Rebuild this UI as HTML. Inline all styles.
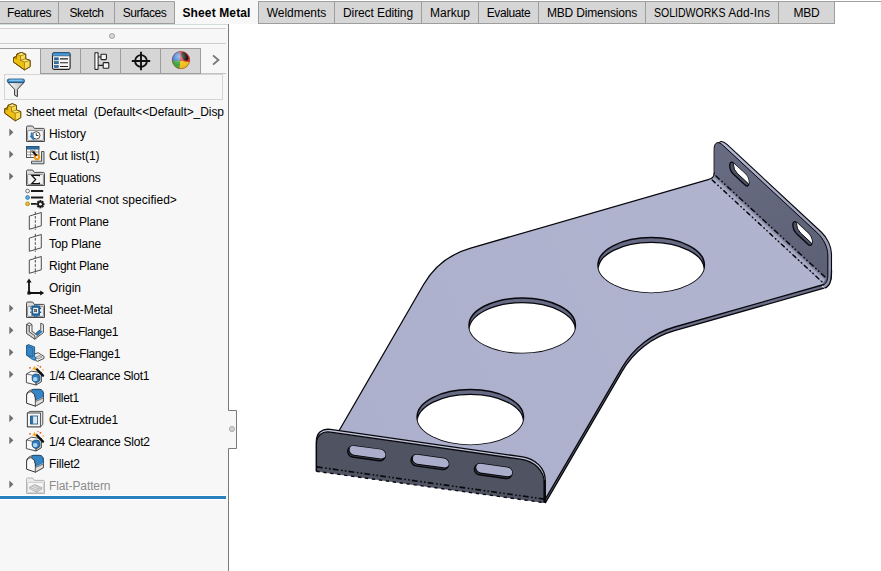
<!DOCTYPE html><html><head><meta charset="utf-8"><title>sheet metal</title><style>
*{box-sizing:border-box;margin:0;padding:0}
html,body{width:881px;height:571px;overflow:hidden;background:#fff}
body{font-family:"Liberation Sans",sans-serif;font-size:12px;color:#000;position:relative}
.abs{position:absolute}
#tabbar{position:absolute;left:0;top:0;width:881px;height:24px}
#tabbar .line{position:absolute;left:0;top:1px;width:881px;height:1px;background:#a0a0a0}
.tab{position:absolute;top:2px;height:22px;background:#d6d6d6;border-right:1px solid #9d9d9d;border-bottom:1px solid #9d9d9d;text-align:center;line-height:23px;white-space:pre}
.tab.act{background:#f7f7f7;border:none;font-weight:bold;top:0;height:24px;line-height:27px}
#panel{position:absolute;left:0;top:24px;width:228px;height:547px;background:#f7f7f7}
.row{position:absolute;left:0;height:22px;width:226px;white-space:pre;overflow:hidden}
.row .t{position:absolute;left:49px;top:1px;line-height:22px}
.row svg{position:absolute}
</style></head><body>
<div id="tabbar"><div class="line"></div>
<div class="tab" style="left:0px;width:59px;letter-spacing:-0.42px">Features</div>
<div class="tab" style="left:59px;width:56px;letter-spacing:-0.45px">Sketch</div>
<div class="tab" style="left:115px;width:60px;letter-spacing:-0.48px">Surfaces</div>
<div class="tab act" style="left:175px;width:83px;letter-spacing:0.12px">Sheet Metal</div>
<div class="tab" style="left:259px;width:76px;letter-spacing:-0.03px">Weldments</div>
<div class="tab" style="left:335px;width:87px;letter-spacing:-0.1px">Direct Editing</div>
<div class="tab" style="left:422px;width:57px;letter-spacing:0.0px">Markup</div>
<div class="tab" style="left:479px;width:60px;letter-spacing:-0.4px">Evaluate</div>
<div class="tab" style="left:539px;width:107px;letter-spacing:-0.18px">MBD Dimensions</div>
<div class="tab" style="left:646px;width:133px;letter-spacing:0.06px"><span style="display:inline-block;transform:scaleX(0.878);transform-origin:0 50%;margin-right:-9.9px;letter-spacing:0">SOLIDWORKS</span> Add-Ins</div>
<div class="tab" style="left:779px;width:56px;letter-spacing:-0.22px">MBD</div>
<div class="abs" style="left:258px;top:1px;width:1px;height:23px;background:#9d9d9d"></div>
</div>
<div id="panel">
<div class="abs" style="left:0;top:0;width:228px;height:4px;background:#fafafa"></div><div class="abs" style="left:0;top:0;width:228px;height:1px;background:#d3dcdc"></div>
<div class="abs" style="left:0;top:4px;width:226px;height:1px;background:#d2d2d2"></div>
<div class="abs" style="left:0;top:19px;width:226px;height:1px;background:#cccccc"></div>
<div class="abs" style="left:109px;top:9px;width:6px;height:6px;border-radius:50%;background:#dadada;border:1px solid #a2a2a2;box-shadow:0 0 0 1px #fcfcfc"></div>
<div class="abs" style="left:0;top:24px;width:201px;height:26px;background:#d6d6d6;border-top:1px solid #9d9d9d;border-bottom:1px solid #9d9d9d"></div>
<div class="abs" style="left:0;top:25px;width:41px;height:26px;background:#f7f7f7;border-right:1px solid #9d9d9d"></div>
<div class="abs" style="left:80px;top:24px;width:1px;height:26px;background:#9d9d9d"></div>
<div class="abs" style="left:120px;top:24px;width:1px;height:26px;background:#9d9d9d"></div>
<div class="abs" style="left:160px;top:24px;width:1px;height:26px;background:#9d9d9d"></div>
<div class="abs" style="left:200px;top:24px;width:1px;height:26px;background:#9d9d9d"></div>
<svg class="abs" style="left:12.5px;top:27.6px" width="19" height="19" viewBox="0 0 19 19"><g transform="translate(0.2 0.3)"><path d="M0.2 5.3 L3.2 4.2 L3.7 1.7 L8.2 0.1 L12.5 1.9 V6.5 L16.9 8.1 V14.4 L11.2 17.6 L0.2 9.7 Z" fill="#f0c010" stroke="#6e5006" stroke-width="1" stroke-linejoin="round"/><path d="M3.7 1.7 L8.2 0.1 L12.5 1.9 L7.3 3.5 Z" fill="#fae883"/><path d="M7.3 3.5 L12.5 1.9 V6.5 L7.3 8.1 Z" fill="#f7dc55"/><path d="M7.3 8.1 L12.5 6.5 L16.9 8.1 L11.2 9.7 Z" fill="#fae883"/><path d="M11.2 9.7 L16.9 8.1 V14.4 L11.2 17.6 Z" fill="#f7dc55"/><path d="M3.7 1.7 L7.3 3.5 V8.1 L11.2 9.7 V17.6 M7.3 3.5 L12.5 1.9 M7.3 8.1 L12.5 6.5 M11.2 9.7 L16.9 8.1 M3.2 4.2 L3.4 6.6 L0.2 5.3" fill="none" stroke="#8a6a0c" stroke-width="0.7" stroke-linejoin="round"/><path d="M0.2 5.3 L3.2 4.2 L3.7 1.7 L8.2 0.1 L12.5 1.9 V6.5 L16.9 8.1 V14.4 L11.2 17.6 L0.2 9.7 Z" fill="none" stroke="#6e5006" stroke-width="1" stroke-linejoin="round"/></g></svg><svg class="abs" style="left:51px;top:27px" width="21" height="21" viewBox="0 0 21 21"><rect x="1.5" y="1.8" width="17.6" height="16.6" rx="1.6" fill="#f6f6f6" stroke="#222" stroke-width="1.1"/><path d="M1.5 3.4 q0-1.6 1.6-1.6h14.4q1.6 0 1.6 1.6v1.4h-17.6z" fill="#4a9bd6" stroke="#1d4f7c" stroke-width="0.7"/><rect x="3.4" y="6.8" width="4" height="2.2" fill="#2b6ea8" stroke="#16456f" stroke-width="0.5"/><rect x="3.4" y="10.6" width="4" height="2.2" fill="#2b6ea8" stroke="#16456f" stroke-width="0.5"/><rect x="3.4" y="14.4" width="4" height="2.2" fill="#2b6ea8" stroke="#16456f" stroke-width="0.5"/><path d="M9 7.9 H17 M9 11.7 H17 M9 15.5 H17" stroke="#222" stroke-width="1.1"/></svg><svg class="abs" style="left:92px;top:27px" width="20" height="21" viewBox="0 0 20 21"><path d="M3 1.6 V18.6 M6 1.6 V18.6" stroke="#222" stroke-width="1.2" fill="none"/><path d="M6 6 H9 M6 14.4 H12" stroke="#222" stroke-width="1.2"/><path d="M3 1.8 H6 M3 18.4 H6" stroke="#222" stroke-width="1.2"/><rect x="3.6" y="2.4" width="1.8" height="15.4" fill="#fff"/><rect x="9" y="3.2" width="5.4" height="5.4" rx="0.8" fill="#f6f6f6" stroke="#222" stroke-width="1.1"/><rect x="11.2" y="11.6" width="5.6" height="5.6" rx="0.8" fill="#f6f6f6" stroke="#222" stroke-width="1.1"/></svg><svg class="abs" style="left:130px;top:26px" width="22" height="22" viewBox="0 0 22 22"><circle cx="11" cy="11" r="5.9" fill="none" stroke="#111" stroke-width="1.9"/><path d="M11 1.8 V20.2 M1.8 11 H20.2" stroke="#111" stroke-width="1.9"/></svg><svg class="abs" style="left:170px;top:25px" width="22" height="22" viewBox="0 0 22 22"><defs><clipPath id="cw"><circle cx="11" cy="11" r="8.8"/></clipPath><radialGradient id="cwg" cx="0.4" cy="0.3" r="0.8"><stop offset="0" stop-color="#fff" stop-opacity="0.55"/><stop offset="0.6" stop-color="#fff" stop-opacity="0"/><stop offset="1" stop-color="#000" stop-opacity="0.25"/></radialGradient></defs><g clip-path="url(#cw)"><rect x="0" y="0" width="22" height="22" fill="#d8281c"/><path d="M0 0 H9 L10.2 11.8 H0 Z" fill="#2f78d6"/><path d="M0 11.8 L10.4 11.8 L9 22 H0 Z" fill="#3aa63a"/><path d="M10.4 11.8 L22 13.6 V22 H9 Z" fill="#f2c21a"/><ellipse cx="14.6" cy="7.4" rx="2.9" ry="4.8" fill="#141414" transform="rotate(-35 14.6 7.4)"/><circle cx="11" cy="11" r="8.8" fill="url(#cwg)"/></g><circle cx="11" cy="11" r="8.8" fill="none" stroke="#7a1a12" stroke-width="0.5" opacity="0.6"/></svg><svg class="abs" style="left:210px;top:29px" width="12" height="14" viewBox="0 0 12 14"><path d="M3 2.4 L8.4 7 L3 11.6" fill="none" stroke="#767676" stroke-width="1.8"/></svg>
<div class="abs" style="left:201px;top:49px;width:25px;height:1px;background:#c4c4c4"></div>
<div class="abs" style="left:4px;top:50px;width:219px;height:26px;border:1px solid #d4d4d4;background:#f7f7f7"></div>
<svg class="abs" style="left:6px;top:54px" width="20" height="20" viewBox="0 0 20 20"><defs><linearGradient id="fg" x1="0" x2="1"><stop offset="0" stop-color="#fff"/><stop offset="1" stop-color="#b8b8b8"/></linearGradient></defs><path d="M2 4.4 L8.6 11.4 V17.2 L11.4 18.6 V11.4 L18 4.4 Z" fill="url(#fg)" stroke="#333" stroke-width="1" stroke-linejoin="round"/><rect x="1.2" y="1" width="17.4" height="3.6" rx="1.8" fill="#3d8fcc" stroke="#1d4f7c" stroke-width="0.8"/><path d="M3.4 2.2 H16.4" stroke="#a8d8f4" stroke-width="1"/></svg>
</div>
<div class="row" style="top:100px;letter-spacing:-0.07px"><svg style="left:3.5px;top:2.5px" width="22" height="22" viewBox="0 0 22 22"><g transform="translate(0.5 0.6) scale(0.96 0.98)"><path d="M0.2 5.3 L3.2 4.2 L3.7 1.7 L8.2 0.1 L12.5 1.9 V6.5 L16.9 8.1 V14.4 L11.2 17.6 L0.2 9.7 Z" fill="#f0c010" stroke="#6e5006" stroke-width="1" stroke-linejoin="round"/><path d="M3.7 1.7 L8.2 0.1 L12.5 1.9 L7.3 3.5 Z" fill="#fae883"/><path d="M7.3 3.5 L12.5 1.9 V6.5 L7.3 8.1 Z" fill="#f7dc55"/><path d="M7.3 8.1 L12.5 6.5 L16.9 8.1 L11.2 9.7 Z" fill="#fae883"/><path d="M11.2 9.7 L16.9 8.1 V14.4 L11.2 17.6 Z" fill="#f7dc55"/><path d="M3.7 1.7 L7.3 3.5 V8.1 L11.2 9.7 V17.6 M7.3 3.5 L12.5 1.9 M7.3 8.1 L12.5 6.5 M11.2 9.7 L16.9 8.1 M3.2 4.2 L3.4 6.6 L0.2 5.3" fill="none" stroke="#8a6a0c" stroke-width="0.7" stroke-linejoin="round"/><path d="M0.2 5.3 L3.2 4.2 L3.7 1.7 L8.2 0.1 L12.5 1.9 V6.5 L16.9 8.1 V14.4 L11.2 17.6 L0.2 9.7 Z" fill="none" stroke="#6e5006" stroke-width="1" stroke-linejoin="round"/></g></svg><span class="t" style="left:26px">sheet metal  (Default&lt;&lt;Default&gt;_Disp</span></div>
<div class="row" style="top:122px;letter-spacing:-0.05px"><svg style="left:8.6px;top:6.4px" width="6" height="9" viewBox="0 0 6 9"><path d="M0.3 0.4 L4.4 4.3 L0.3 8.2Z" fill="#6e6e6e"/></svg><svg style="left:24px;top:0px" width="22" height="22" viewBox="0 0 22 22"><path d="M2.5 19.5V5.2q0-1.2 1.2-1.2h5l1.6 2.4h9q1.2 0 1.2 1.2v11.9z" fill="#dcdcdc" stroke="#4a4a4a" stroke-width="1"/><rect x="3.6" y="8.4" width="15.8" height="10" rx="0.8" fill="#f4f4f4" stroke="#7a7a7a" stroke-width="0.8"/><circle cx="12.3" cy="13.4" r="3.7" fill="#fff" stroke="#3a3a3a" stroke-width="0.9"/><path d="M12.3 11.2V13.5H14.4" fill="none" stroke="#222" stroke-width="0.9"/><path d="M8.2 10.6 A4.6 4.6 0 0 0 10.4 17.6" fill="none" stroke="#2b7bbf" stroke-width="1.8"/><path d="M5.6 13.4 L10.2 13.2 L7.6 16.8 Z" fill="#2b7bbf" transform="rotate(-20 8 14)"/></svg><span class="t">History</span></div>
<div class="row" style="top:144px;letter-spacing:-0.08px"><svg style="left:8.6px;top:6.4px" width="6" height="9" viewBox="0 0 6 9"><path d="M0.3 0.4 L4.4 4.3 L0.3 8.2Z" fill="#6e6e6e"/></svg><svg style="left:24px;top:0px" width="22" height="22" viewBox="0 0 22 22"><path d="M17.5 7.5 H20 V19.8 H7.5 V17.2 H17.5 Z" fill="#c9d3dc" stroke="#444" stroke-width="0.9"/><rect x="2.5" y="2.5" width="12.4" height="11" fill="#fff" stroke="#444" stroke-width="0.9"/><rect x="2.5" y="2.5" width="12.4" height="2.6" fill="#2b6ea8" stroke="#1d4f7c" stroke-width="0.6"/><path d="M2.5 8 H15 M2.5 10.8 H15 M6.6 5 V13.5 M10.8 5 V13.5" stroke="#777" stroke-width="0.8" fill="none"/><g transform="translate(13 13.2)"><rect x="-1" y="-3.3000000000000003" width="2" height="6.6000000000000005" fill="#f0981c" transform="rotate(0)"/><rect x="-1" y="-3.3000000000000003" width="2" height="6.6000000000000005" fill="#f0981c" transform="rotate(45)"/><rect x="-1" y="-3.3000000000000003" width="2" height="6.6000000000000005" fill="#f0981c" transform="rotate(90)"/><rect x="-1" y="-3.3000000000000003" width="2" height="6.6000000000000005" fill="#f0981c" transform="rotate(135)"/><circle r="2.2" fill="#f0981c"/><circle r="1.12" fill="#f4f4f4"/></g><path d="M8.2 7 L12.6 11.6" stroke="#111" stroke-width="2"/><path d="M7.6 6.4 L9 7.8" stroke="#888" stroke-width="2"/></svg><span class="t">Cut list(1)</span></div>
<div class="row" style="top:166px;letter-spacing:-0.21px"><svg style="left:8.6px;top:6.4px" width="6" height="9" viewBox="0 0 6 9"><path d="M0.3 0.4 L4.4 4.3 L0.3 8.2Z" fill="#6e6e6e"/></svg><svg style="left:24px;top:0px" width="22" height="22" viewBox="0 0 22 22"><path d="M2.5 19.5V5.2q0-1.2 1.2-1.2h5l1.6 2.4h9q1.2 0 1.2 1.2v11.9z" fill="#dcdcdc" stroke="#4a4a4a" stroke-width="1"/><rect x="3.6" y="8.4" width="15.8" height="10" rx="0.8" fill="#f4f4f4" stroke="#7a7a7a" stroke-width="0.8"/><path d="M15.4 10.2 V9.4 H7.8 L11.6 13.6 L7.8 17.6 H15.4 V16.6" fill="none" stroke="#111" stroke-width="1.3" stroke-linejoin="miter"/></svg><span class="t">Equations</span></div>
<div class="row" style="top:188px;letter-spacing:0.02px"><svg style="left:24px;top:0px" width="22" height="22" viewBox="0 0 22 22"><path d="M7 3 H19.2 M7 9.5 H19.2 M7 15.8 H12.5" stroke="#1a1a1a" stroke-width="1.8" fill="none"/><circle cx="3.6" cy="3" r="1.9" fill="#f4f4f4" stroke="#555" stroke-width="0.8"/><circle cx="3.6" cy="9.5" r="1.9" fill="#5fb0e6" stroke="#2a6a9a" stroke-width="0.8"/><circle cx="3.6" cy="15.8" r="1.9" fill="#f4c21c" stroke="#9a7a10" stroke-width="0.8"/><g transform="translate(16.4 16.2)"><rect x="-1" y="-4.1" width="2" height="8.2" fill="#1a1a1a" transform="rotate(0)"/><rect x="-1" y="-4.1" width="2" height="8.2" fill="#1a1a1a" transform="rotate(45)"/><rect x="-1" y="-4.1" width="2" height="8.2" fill="#1a1a1a" transform="rotate(90)"/><rect x="-1" y="-4.1" width="2" height="8.2" fill="#1a1a1a" transform="rotate(135)"/><circle r="3.0" fill="#1a1a1a"/><circle r="1.40" fill="#f4f4f4"/></g></svg><span class="t">Material &lt;not specified&gt;</span></div>
<div class="row" style="top:210px;letter-spacing:-0.22px"><svg style="left:24px;top:0px" width="22" height="22" viewBox="0 0 22 22"><path d="M5.3 6.1 L17.3 2.5 V15.8 L5.3 19.3 Z" fill="none" stroke="#3a3a3a" stroke-width="0.9" stroke-linejoin="round"/><path d="M11.3 1.8 V19.8" stroke="#3a3a3a" stroke-width="0.9" stroke-dasharray="2.6 1.6" fill="none"/></svg><span class="t">Front Plane</span></div>
<div class="row" style="top:232px;letter-spacing:-0.15px"><svg style="left:24px;top:0px" width="22" height="22" viewBox="0 0 22 22"><path d="M5.3 6.1 L17.3 2.5 V15.8 L5.3 19.3 Z" fill="none" stroke="#3a3a3a" stroke-width="0.9" stroke-linejoin="round"/><path d="M11.3 1.8 V19.8" stroke="#3a3a3a" stroke-width="0.9" stroke-dasharray="2.6 1.6" fill="none"/></svg><span class="t">Top Plane</span></div>
<div class="row" style="top:254px;letter-spacing:-0.22px"><svg style="left:24px;top:0px" width="22" height="22" viewBox="0 0 22 22"><path d="M5.3 6.1 L17.3 2.5 V15.8 L5.3 19.3 Z" fill="none" stroke="#3a3a3a" stroke-width="0.9" stroke-linejoin="round"/><path d="M11.3 1.8 V19.8" stroke="#3a3a3a" stroke-width="0.9" stroke-dasharray="2.6 1.6" fill="none"/></svg><span class="t">Right Plane</span></div>
<div class="row" style="top:276px;letter-spacing:0px"><svg style="left:24px;top:0px" width="22" height="22" viewBox="0 0 22 22"><path d="M5 17 V5.5 M5 17 H17" stroke="#111" stroke-width="1.8" fill="none"/><path d="M5 2.6 L7.6 6.6 H2.4 Z M20.2 17 L16.2 19.6 V14.4 Z" fill="#111"/><rect x="3.4" y="15.4" width="3.2" height="3.2" fill="#111"/></svg><span class="t">Origin</span></div>
<div class="row" style="top:298px;letter-spacing:-0.1px"><svg style="left:8.6px;top:6.4px" width="6" height="9" viewBox="0 0 6 9"><path d="M0.3 0.4 L4.4 4.3 L0.3 8.2Z" fill="#6e6e6e"/></svg><svg style="left:24px;top:0px" width="22" height="22" viewBox="0 0 22 22"><path d="M2.5 19.5V5.2q0-1.2 1.2-1.2h5l1.6 2.4h9q1.2 0 1.2 1.2v11.9z" fill="#dcdcdc" stroke="#4a4a4a" stroke-width="1"/><rect x="3.6" y="8.4" width="15.8" height="10" rx="0.8" fill="#f4f4f4" stroke="#7a7a7a" stroke-width="0.8"/><rect x="7.4" y="7.6" width="8.6" height="10.2" fill="#1f5f98"/><rect x="9.2" y="9.8" width="5" height="5.6" fill="#f4f4f4"/><rect x="10.6" y="11.4" width="2.2" height="2.4" fill="#888" stroke="#333" stroke-width="0.5"/><path d="M6.2 9.6h1.4v1.6h-1.4zM6.2 13.4h1.4v1.6h-1.4zM15.8 9.6h1.4v1.6h-1.4zM15.8 13.4h1.4v1.6h-1.4zM10 6.4h1.4v1.4h-1.4zM12.2 6.4h1.4v1.4h-1.4zM10 17.6h1.4v1.4h-1.4zM12.2 17.6h1.4v1.4h-1.4z" fill="#1f5f98"/></svg><span class="t">Sheet-Metal</span></div>
<div class="row" style="top:320px;letter-spacing:-0.48px"><svg style="left:8.6px;top:6.4px" width="6" height="9" viewBox="0 0 6 9"><path d="M0.3 0.4 L4.4 4.3 L0.3 8.2Z" fill="#6e6e6e"/></svg><svg style="left:24px;top:0px" width="22" height="22" viewBox="0 0 22 22"><path d="M2.6 4.4 L5.2 2.8 L8 4.6 V11.4 L11.4 13.6 L16.8 9.6 V3.2 L19.4 4.6 V12.6 L10.8 19.2 L2.6 13.4 Z" fill="#f4f4f4" stroke="#3c3c3c" stroke-width="0.9" stroke-linejoin="round"/><path d="M11.2 14.4 L15.4 10.2 L18.2 11.4 L13.8 15.8 Z" fill="#2b7bbf" stroke="#1d4f7c" stroke-width="0.6"/><path d="M8 11.4 L11.2 14.4 L13.8 15.8 L10.8 17.6 L6 13.6 Z" fill="#fafafa" stroke="#3c3c3c" stroke-width="0.5"/><path d="M5.2 5.8 V11.8 L10.8 15.8 M5.2 5.8 L2.6 4.4 M5.2 5.8 L8 4.6" stroke="#3c3c3c" stroke-width="0.7" fill="none"/><path d="M2.6 4.4 L5.2 5.8 V11.8 L10.8 15.8 V19.2 L2.6 13.4 Z" fill="#d4d4d4" stroke="#3c3c3c" stroke-width="0.7" stroke-linejoin="round"/></svg><span class="t">Base-Flange1</span></div>
<div class="row" style="top:342px;letter-spacing:-0.37px"><svg style="left:8.6px;top:6.4px" width="6" height="9" viewBox="0 0 6 9"><path d="M0.3 0.4 L4.4 4.3 L0.3 8.2Z" fill="#6e6e6e"/></svg><svg style="left:24px;top:0px" width="22" height="22" viewBox="0 0 22 22"><path d="M9.6 12.2 L14.2 10.8 L20 14.4 V16.4 L13.6 19.4 L9.6 17 Z" fill="#f4f4f4" stroke="#3c3c3c" stroke-width="0.9" stroke-linejoin="round"/><path d="M11.6 15.2 L15.2 13.4 L18.2 15 L14.2 17 Z" fill="#cfcfcf" stroke="#555" stroke-width="0.5"/><path d="M2.6 3.6 L4.4 2.6 L10.6 5 V14.6 L12.2 16.4 L11.2 18.2 L8.6 17.6 L2.6 13.2 Z" fill="#4a9ad4" stroke="#1a4f7e" stroke-width="0.9" stroke-linejoin="round"/><path d="M2.6 3.6 L8.8 6.2 V15.2 L2.6 13.2 Z" fill="#3585c4" stroke="#1a4f7e" stroke-width="0.6"/></svg><span class="t">Edge-Flange1</span></div>
<div class="row" style="top:364px;letter-spacing:-0.28px"><svg style="left:8.6px;top:6.4px" width="6" height="9" viewBox="0 0 6 9"><path d="M0.3 0.4 L4.4 4.3 L0.3 8.2Z" fill="#6e6e6e"/></svg><svg style="left:24px;top:0px" width="22" height="22" viewBox="0 0 22 22"><path d="M2.4 10 L7.4 7.2 L17.4 8.6 V17.6 L12 21 L2.4 18.6 Z" fill="#fafafa" stroke="#3c3c3c" stroke-width="0.9" stroke-linejoin="round"/><path d="M12 12 L17.4 8.6 V17.6 L12 21 Z" fill="#cfcfcf" stroke="#3c3c3c" stroke-width="0.7"/><path d="M2.4 10 L12 12 V21" fill="none" stroke="#3c3c3c" stroke-width="0.7"/><ellipse cx="12" cy="14.2" rx="3.9" ry="4.1" fill="#2b7bbf" stroke="#16456f" stroke-width="0.8"/><ellipse cx="11.2" cy="15.1" rx="2.3" ry="2.2" fill="#a8d4f0"/><path d="M12.6 5 L19 11.6" stroke="#111" stroke-width="2.4" stroke-linecap="round"/><path d="M10.4 1.8 L11.4 3.7 L13.4 4.1 L11.7 5.2 L11.3 7.1 L10 5.5 L8 5.5 L9.3 4 Z" fill="#f7a81c"/><circle cx="6" cy="3.8" r="0.9" fill="#e2541c"/><circle cx="16.4" cy="2.8" r="0.9" fill="#e2541c"/><circle cx="19" cy="6" r="0.8" fill="#f7a81c"/><circle cx="14" cy="1.6" r="0.7" fill="#e2541c"/></svg><span class="t">1/4 Clearance Slot1</span></div>
<div class="row" style="top:386px;letter-spacing:-0.29px"><svg style="left:24px;top:0px" width="22" height="22" viewBox="0 0 22 22"><path d="M2.6 17.2 V8.8 Q3 4.8 9.4 3.4 H15.6 Q19.4 3.8 19.4 8.4 V15.6 L11.4 20.2 Z" fill="#fafafa" stroke="#333" stroke-width="1" stroke-linejoin="round"/><path d="M9.4 3.4 H15.6 Q19.4 3.8 19.4 8.4 V10.8 L11.4 14.4 V12 Q11.2 7.4 7.2 5.6 Q8 4 9.4 3.4 Z" fill="#3585c4" stroke="#16456f" stroke-width="0.7" stroke-linejoin="round"/><path d="M11.4 14.4 L19.4 10.8 L19.4 12 L11.4 15.6 Z" fill="#8cc0e6"/><path d="M2.6 8.8 Q4 5.6 7.2 5.6 Q11.2 7.4 11.4 12 V20.2" fill="none" stroke="#333" stroke-width="0.8"/><path d="M11.4 15.6 L19.4 12 V15.6 L11.4 20.2 Z" fill="#e0e0e0" stroke="#333" stroke-width="0.6"/></svg><span class="t">Fillet1</span></div>
<div class="row" style="top:408px;letter-spacing:-0.14px"><svg style="left:8.6px;top:6.4px" width="6" height="9" viewBox="0 0 6 9"><path d="M0.3 0.4 L4.4 4.3 L0.3 8.2Z" fill="#6e6e6e"/></svg><svg style="left:24px;top:0px" width="22" height="22" viewBox="0 0 22 22"><path d="M3.4 5 L6 3.4 H18.8 V16.6 L16.4 18.8 H3.4 Z" fill="#e6e6e6" stroke="#444" stroke-width="0.9" stroke-linejoin="round"/><rect x="3.4" y="5" width="13" height="13.8" fill="#f6f6f6" stroke="#444" stroke-width="0.9"/><rect x="6.6" y="8" width="7" height="8" fill="#2b74b4" stroke="#16456f" stroke-width="0.8"/><path d="M8.6 8.4 H13.2 V15.6 H8.6 Z" fill="#d9e8f4"/><path d="M8.6 8.4 V15.6" stroke="#16456f" stroke-width="0.6"/></svg><span class="t">Cut-Extrude1</span></div>
<div class="row" style="top:430px;letter-spacing:-0.25px"><svg style="left:8.6px;top:6.4px" width="6" height="9" viewBox="0 0 6 9"><path d="M0.3 0.4 L4.4 4.3 L0.3 8.2Z" fill="#6e6e6e"/></svg><svg style="left:24px;top:0px" width="22" height="22" viewBox="0 0 22 22"><path d="M2.4 10 L7.4 7.2 L17.4 8.6 V17.6 L12 21 L2.4 18.6 Z" fill="#fafafa" stroke="#3c3c3c" stroke-width="0.9" stroke-linejoin="round"/><path d="M12 12 L17.4 8.6 V17.6 L12 21 Z" fill="#cfcfcf" stroke="#3c3c3c" stroke-width="0.7"/><path d="M2.4 10 L12 12 V21" fill="none" stroke="#3c3c3c" stroke-width="0.7"/><ellipse cx="12" cy="14.2" rx="3.9" ry="4.1" fill="#2b7bbf" stroke="#16456f" stroke-width="0.8"/><ellipse cx="11.2" cy="15.1" rx="2.3" ry="2.2" fill="#a8d4f0"/><path d="M12.6 5 L19 11.6" stroke="#111" stroke-width="2.4" stroke-linecap="round"/><path d="M10.4 1.8 L11.4 3.7 L13.4 4.1 L11.7 5.2 L11.3 7.1 L10 5.5 L8 5.5 L9.3 4 Z" fill="#f7a81c"/><circle cx="6" cy="3.8" r="0.9" fill="#e2541c"/><circle cx="16.4" cy="2.8" r="0.9" fill="#e2541c"/><circle cx="19" cy="6" r="0.8" fill="#f7a81c"/><circle cx="14" cy="1.6" r="0.7" fill="#e2541c"/></svg><span class="t">1/4 Clearance Slot2</span></div>
<div class="row" style="top:452px;letter-spacing:-0.17px"><svg style="left:24px;top:0px" width="22" height="22" viewBox="0 0 22 22"><path d="M2.6 17.2 V8.8 Q3 4.8 9.4 3.4 H15.6 Q19.4 3.8 19.4 8.4 V15.6 L11.4 20.2 Z" fill="#fafafa" stroke="#333" stroke-width="1" stroke-linejoin="round"/><path d="M9.4 3.4 H15.6 Q19.4 3.8 19.4 8.4 V10.8 L11.4 14.4 V12 Q11.2 7.4 7.2 5.6 Q8 4 9.4 3.4 Z" fill="#3585c4" stroke="#16456f" stroke-width="0.7" stroke-linejoin="round"/><path d="M11.4 14.4 L19.4 10.8 L19.4 12 L11.4 15.6 Z" fill="#8cc0e6"/><path d="M2.6 8.8 Q4 5.6 7.2 5.6 Q11.2 7.4 11.4 12 V20.2" fill="none" stroke="#333" stroke-width="0.8"/><path d="M11.4 15.6 L19.4 12 V15.6 L11.4 20.2 Z" fill="#e0e0e0" stroke="#333" stroke-width="0.6"/></svg><span class="t">Fillet2</span></div>
<div class="row" style="top:474px;letter-spacing:-0.11px;color:#8c8c8c"><svg style="left:8.6px;top:6.4px" width="6" height="9" viewBox="0 0 6 9"><path d="M0.3 0.4 L4.4 4.3 L0.3 8.2Z" fill="#6e6e6e"/></svg><svg style="left:24px;top:0px" width="22" height="22" viewBox="0 0 22 22"><path d="M2.5 19.5V5.2q0-1.2 1.2-1.2h5l1.6 2.4h9q1.2 0 1.2 1.2v11.9z" fill="#ececec" stroke="#b4b4b4" stroke-width="1"/><rect x="3.6" y="8.4" width="15.8" height="10" rx="0.8" fill="#f6f6f6" stroke="#c4c4c4" stroke-width="0.8"/><path d="M5.6 13.2 L10.4 10.6 L18 13.6 L17.6 15.4 L12.6 18 L5.8 15 Z" fill="#e4e4e4" stroke="#a8a8a8" stroke-width="0.8" stroke-linejoin="round"/><path d="M5.6 13.2 L12.6 16.2 L18 13.6 M12.6 16.2 V18 M8 12 L14.8 15 M10.4 10.6 L16.4 14.4" fill="none" stroke="#a8a8a8" stroke-width="0.7"/></svg><span class="t">Flat-Pattern</span></div>
<div class="abs" style="left:0;top:495px;width:226px;height:5px;background:#fff"></div><div class="abs" style="left:0;top:496px;width:226px;height:3px;background:#2980be"></div>
<svg class="abs" style="left:220px;top:24px" width="20" height="547" viewBox="220 24 20 547"><path d="M228.5 24 V410.5 H236.5 V448.5 H228.5 V571" fill="none" stroke="#7a7a7a" stroke-width="1"/><rect x="228" y="411" width="8" height="37" fill="#f7f7f7"/><circle cx="232" cy="429" r="2.6" fill="#d0d0d0" stroke="#a0a0a0" stroke-width="0.8"/></svg>
<svg class="abs" style="left:300px;top:120px" width="581" height="420" viewBox="300 120 581 420"><defs><linearGradient id="gp" gradientUnits="userSpaceOnUse" x1="340" y1="430" x2="820" y2="200"><stop offset="0" stop-color="#adb0cc"/><stop offset="1" stop-color="#b1b4cf"/></linearGradient><linearGradient id="gf" gradientUnits="userSpaceOnUse" x1="715" y1="150" x2="830" y2="270"><stop offset="0" stop-color="#686c82"/><stop offset="1" stop-color="#5d6176"/></linearGradient><linearGradient id="gb" gradientUnits="userSpaceOnUse" x1="720" y1="140" x2="832" y2="260"><stop offset="0" stop-color="#b6bad6"/><stop offset="1" stop-color="#9094ae"/></linearGradient><linearGradient id="gbend" gradientUnits="userSpaceOnUse" x1="711.9" y1="179.7" x2="715.6" y2="175.7"><stop offset="0" stop-color="#adb0cc"/><stop offset="0.4" stop-color="#a8abc7"/><stop offset="0.6" stop-color="#9094ae"/><stop offset="1" stop-color="#72768c"/></linearGradient></defs><path d="M 317.5 468 L 423.6 284.5 A 79.4 79.4 0 0 1 470.7 248.1 L 711 178.7 L 824 284.5 L 674.6 327 A 89 89 0 0 0 621.9 367.9 L 545.2 499.4 Z" transform="translate(0,3.7)" fill="#6c708a"/><path d="M 824 284.5 L 674.6 327 A 89 89 0 0 0 621.9 367.9 L 545.2 499.4" transform="translate(0,3.7)" fill="none" stroke="#08080c" stroke-width="1.3" stroke-linejoin="round"/><path d="M 714.4 175.6 L 714.4 149.4 C 714.40 141.90 718.06 140.30 723.56 145.41 L 817.84 233.02 C 824.00 238.74 828.10 247.55 828.10 255.05 L 828.1 275.5 C 828.1 280 826.5 283.6 824 284.5 L 711.9 179.7 Z" transform="translate(3.4,-1.0)" fill="url(#gb)" stroke="#08080c" stroke-width="1.1" stroke-linejoin="round"/><path d="M 831.5 270 C 831.5 281 830 286.5 824.5 288.2 L 822 284.5 L 828.1 270 Z" fill="#8f93ad"/><path d="M 831.5 270 C 831.5 281 830 286.5 824.5 288.2" fill="none" stroke="#08080c" stroke-width="1.3"/><path d="M 317.5 468 L 423.6 284.5 A 79.4 79.4 0 0 1 470.7 248.1 L 711 178.7 L 824 284.5 L 674.6 327 A 89 89 0 0 0 621.9 367.9 L 545.2 499.4 Z" fill="url(#gp)"/><path d="M 824 284.5 L 674.6 327 A 89 89 0 0 0 621.9 367.9 L 545.2 499.4 M 317.5 468 L 423.6 284.5 A 79.4 79.4 0 0 1 470.7 248.1 L 709 179.3" fill="none" stroke="#08080c" stroke-width="1.3" stroke-linejoin="round"/><clipPath id="h0"><ellipse cx="651.2" cy="265" rx="53.2" ry="27.4"/></clipPath><ellipse cx="651.2" cy="265" rx="53.2" ry="27.4" fill="#666a85" stroke="#08080c" stroke-width="1.5"/><ellipse cx="651.2" cy="269.7" rx="53.2" ry="27.4" fill="#fff" stroke="#08080c" stroke-width="1.3" clip-path="url(#h0)"/><clipPath id="h1"><ellipse cx="522.2" cy="325.4" rx="53.2" ry="27.4"/></clipPath><ellipse cx="522.2" cy="325.4" rx="53.2" ry="27.4" fill="#666a85" stroke="#08080c" stroke-width="1.5"/><ellipse cx="522.2" cy="330.09999999999997" rx="53.2" ry="27.4" fill="#fff" stroke="#08080c" stroke-width="1.3" clip-path="url(#h1)"/><clipPath id="h2"><ellipse cx="470.3" cy="417" rx="53.2" ry="27.4"/></clipPath><ellipse cx="470.3" cy="417" rx="53.2" ry="27.4" fill="#666a85" stroke="#08080c" stroke-width="1.5"/><ellipse cx="470.3" cy="421.7" rx="53.2" ry="27.4" fill="#fff" stroke="#08080c" stroke-width="1.3" clip-path="url(#h2)"/><path d="M 714.4 175.6 L 714.4 149.4 C 714.40 141.90 718.06 140.30 723.56 145.41 L 817.84 233.02 C 824.00 238.74 828.10 247.55 828.10 255.05 L 828.1 275.5 C 828.1 280 826.5 283.6 824 284.5 L 711.9 179.7 Z" fill="url(#gf)"/><path d="M 714.4 175.6 L 714.4 149.4 C 714.40 141.90 718.06 140.30 723.56 145.41 L 817.84 233.02 C 824.00 238.74 828.10 247.55 828.10 255.05 L 828.1 275.5 C 828.1 280 826.5 283.6 824 284.5" fill="none" stroke="#08080c" stroke-width="1.0" stroke-linejoin="round" transform="translate(-0.3,0.2)"/><path d="M 708.5 179.5 C 712 178.8 714.4 177 714.4 172.5 L 716 176 L 712 180 Z" fill="#9a9eb9" stroke="none"/><path d="M 708.5 179.5 C 712 178.8 714.4 177 714.4 172.5" fill="none" stroke="#08080c" stroke-width="1.15"/><path d="M 711.9 179.7 L 715.4 175.5 L 826.3 278.2 L 823.3 283 Z" fill="url(#gbend)"/><path d="M 715.4 175.5 L 826.3 278.2" stroke="#08080c" stroke-width="1.5" stroke-dasharray="5.8 2.4 1.6 2.2 1.6 2.4" fill="none"/><path d="M 711.9 179.7 L 823.3 283" stroke="#08080c" stroke-width="1.5" stroke-dasharray="5 2.6 1.6 2.3 1.6 2.6" fill="none"/><clipPath id="rs0"><rect x="-13.1" y="-5.6" width="26.2" height="11.2" rx="5.6" transform="matrix(0.7326 0.6806 0 1 739.3 174.1)"/></clipPath><rect x="-13.1" y="-5.6" width="26.2" height="11.2" rx="5.6" transform="matrix(0.7326 0.6806 0 1 739.3 174.1)" fill="#4b4f64" stroke="#08080c" stroke-width="1.3" vector-effect="non-scaling-stroke"/><g clip-path="url(#rs0)"><rect x="-13.1" y="-5.6" width="26.2" height="11.2" rx="5.6" transform="matrix(0.7326 0.6806 0 1 742.9999999999999 173.1)" fill="#fff" stroke="#08080c" stroke-width="1" vector-effect="non-scaling-stroke"/></g><clipPath id="rs1"><rect x="-13.1" y="-5.6" width="26.2" height="11.2" rx="5.6" transform="matrix(0.7326 0.6806 0 1 802.4 233.5)"/></clipPath><rect x="-13.1" y="-5.6" width="26.2" height="11.2" rx="5.6" transform="matrix(0.7326 0.6806 0 1 802.4 233.5)" fill="#4b4f64" stroke="#08080c" stroke-width="1.3" vector-effect="non-scaling-stroke"/><g clip-path="url(#rs1)"><rect x="-13.1" y="-5.6" width="26.2" height="11.2" rx="5.6" transform="matrix(0.7326 0.6806 0 1 806.0999999999999 232.5)" fill="#fff" stroke="#08080c" stroke-width="1" vector-effect="non-scaling-stroke"/></g><path d="M 316.4 471.3 L 316.4 440.95 C 316.40 432.85 322.00 428.25 330.40 429.45 L 521.2 456.65 C 535.60 458.71 545.20 468.08 545.20 480.08 L 545.2 502.8 Z" fill="#c0c3da"/><path d="M 316.4 471.3 L 316.4 440.95 C 316.40 432.85 322.00 428.25 330.40 429.45 L 521.2 456.65 C 535.60 458.71 545.20 468.08 545.20 480.08 L 545.2 502.8" fill="none" stroke="#08080c" stroke-width="1.3" stroke-linejoin="round"/><path d="M 316.4 471.3 L 316.4 443.65 C 316.40 435.55 322.00 430.95 330.40 432.15 L 520.2 459.21 C 534.60 461.26 544.20 470.63 544.20 482.63 L 544.2 502.7 Z" fill="#505362"/><path d="M 316.4 471.3 L 316.4 443.65 C 316.40 435.55 322.00 430.95 330.40 432.15 L 520.2 459.21 C 534.60 461.26 544.20 470.63 544.20 482.63 L 544.2 502.7" fill="none" stroke="#08080c" stroke-width="1.3" stroke-linejoin="round"/><path d="M 316.9 466.9 L 544.2 499.09" stroke="#08080c" stroke-width="1.6" stroke-dasharray="5.8 2.6 1.6 2.2 1.6 2.2" fill="none"/><path d="M 316.4 471.3 L 545.2 502.8" stroke="#08080c" stroke-width="1.4" stroke-dasharray="3.3 3.7" fill="none"/><path d="M 544.8000000000001 480.1 L 544.8000000000001 502.6" stroke="#08080c" stroke-width="2" fill="none"/><clipPath id="fs0"><rect x="-19.0" y="-5.6" width="38.0" height="11.2" rx="5.6" transform="translate(366.6 453.30) rotate(8.00)"/></clipPath><rect x="-19.0" y="-5.6" width="38.0" height="11.2" rx="5.6" transform="translate(366.6 453.30) rotate(8.00)" fill="#3f4250" stroke="#08080c" stroke-width="1.4"/><g clip-path="url(#fs0)"><rect x="-19.0" y="-5.6" width="38.0" height="11.2" rx="5.6" transform="translate(367.90000000000003 451.60) rotate(8.00)" fill="#abaeca" stroke="#08080c" stroke-width="1.1"/></g><clipPath id="fs1"><rect x="-19.0" y="-5.6" width="38.0" height="11.2" rx="5.6" transform="translate(429.9 462.19) rotate(8.00)"/></clipPath><rect x="-19.0" y="-5.6" width="38.0" height="11.2" rx="5.6" transform="translate(429.9 462.19) rotate(8.00)" fill="#3f4250" stroke="#08080c" stroke-width="1.4"/><g clip-path="url(#fs1)"><rect x="-19.0" y="-5.6" width="38.0" height="11.2" rx="5.6" transform="translate(431.2 460.49) rotate(8.00)" fill="#abaeca" stroke="#08080c" stroke-width="1.1"/></g><clipPath id="fs2"><rect x="-19.0" y="-5.6" width="38.0" height="11.2" rx="5.6" transform="translate(493.3 471.10) rotate(8.00)"/></clipPath><rect x="-19.0" y="-5.6" width="38.0" height="11.2" rx="5.6" transform="translate(493.3 471.10) rotate(8.00)" fill="#3f4250" stroke="#08080c" stroke-width="1.4"/><g clip-path="url(#fs2)"><rect x="-19.0" y="-5.6" width="38.0" height="11.2" rx="5.6" transform="translate(494.6 469.40) rotate(8.00)" fill="#abaeca" stroke="#08080c" stroke-width="1.1"/></g></svg>
</body></html>
